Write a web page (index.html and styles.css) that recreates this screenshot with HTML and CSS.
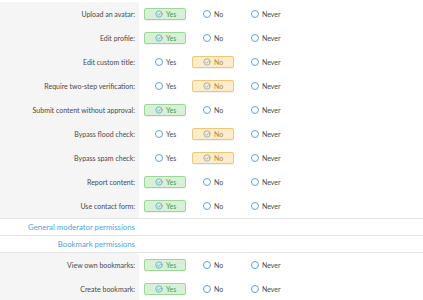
FILE: index.html
```html
<!DOCTYPE html>
<html lang="en">
<head>
  <meta charset="UTF-8" />
  <title>Permissions</title>
  <link rel="stylesheet" href="styles.css">
</head>
<body>
  <div class="perm-list">
    <div class="perm-group">
      <div class="perm-row">
        <div class="perm-label">Upload an avatar:</div>
        <div class="perm-opts">
          <span class="opt yes on"><i class="dot"><svg viewBox="0 0 10 10"><circle cx="5" cy="5" r="4"/><path d="M3 5.2l1.4 1.4 2.6-2.8"/></svg></i>Yes</span>
          <span class="opt"><i class="dot"></i>No</span>
          <span class="opt"><i class="dot"></i>Never</span>
        </div>
      </div>
      <div class="perm-row">
        <div class="perm-label">Edit profile:</div>
        <div class="perm-opts">
          <span class="opt yes on"><i class="dot"><svg viewBox="0 0 10 10"><circle cx="5" cy="5" r="4"/><path d="M3 5.2l1.4 1.4 2.6-2.8"/></svg></i>Yes</span>
          <span class="opt"><i class="dot"></i>No</span>
          <span class="opt"><i class="dot"></i>Never</span>
        </div>
      </div>
      <div class="perm-row">
        <div class="perm-label">Edit custom title:</div>
        <div class="perm-opts">
          <span class="opt"><i class="dot"></i>Yes</span>
          <span class="opt no on"><i class="dot"><svg viewBox="0 0 10 10"><circle cx="5" cy="5" r="4"/><path d="M3 5.2l1.4 1.4 2.6-2.8"/></svg></i>No</span>
          <span class="opt"><i class="dot"></i>Never</span>
        </div>
      </div>
      <div class="perm-row">
        <div class="perm-label">Require two-step verification:</div>
        <div class="perm-opts">
          <span class="opt"><i class="dot"></i>Yes</span>
          <span class="opt no on"><i class="dot"><svg viewBox="0 0 10 10"><circle cx="5" cy="5" r="4"/><path d="M3 5.2l1.4 1.4 2.6-2.8"/></svg></i>No</span>
          <span class="opt"><i class="dot"></i>Never</span>
        </div>
      </div>
      <div class="perm-row">
        <div class="perm-label">Submit content without approval:</div>
        <div class="perm-opts">
          <span class="opt yes on"><i class="dot"><svg viewBox="0 0 10 10"><circle cx="5" cy="5" r="4"/><path d="M3 5.2l1.4 1.4 2.6-2.8"/></svg></i>Yes</span>
          <span class="opt"><i class="dot"></i>No</span>
          <span class="opt"><i class="dot"></i>Never</span>
        </div>
      </div>
      <div class="perm-row">
        <div class="perm-label">Bypass flood check:</div>
        <div class="perm-opts">
          <span class="opt"><i class="dot"></i>Yes</span>
          <span class="opt no on"><i class="dot"><svg viewBox="0 0 10 10"><circle cx="5" cy="5" r="4"/><path d="M3 5.2l1.4 1.4 2.6-2.8"/></svg></i>No</span>
          <span class="opt"><i class="dot"></i>Never</span>
        </div>
      </div>
      <div class="perm-row">
        <div class="perm-label">Bypass spam check:</div>
        <div class="perm-opts">
          <span class="opt"><i class="dot"></i>Yes</span>
          <span class="opt no on"><i class="dot"><svg viewBox="0 0 10 10"><circle cx="5" cy="5" r="4"/><path d="M3 5.2l1.4 1.4 2.6-2.8"/></svg></i>No</span>
          <span class="opt"><i class="dot"></i>Never</span>
        </div>
      </div>
      <div class="perm-row">
        <div class="perm-label">Report content:</div>
        <div class="perm-opts">
          <span class="opt yes on"><i class="dot"><svg viewBox="0 0 10 10"><circle cx="5" cy="5" r="4"/><path d="M3 5.2l1.4 1.4 2.6-2.8"/></svg></i>Yes</span>
          <span class="opt"><i class="dot"></i>No</span>
          <span class="opt"><i class="dot"></i>Never</span>
        </div>
      </div>
      <div class="perm-row">
        <div class="perm-label">Use contact form:</div>
        <div class="perm-opts">
          <span class="opt yes on"><i class="dot"><svg viewBox="0 0 10 10"><circle cx="5" cy="5" r="4"/><path d="M3 5.2l1.4 1.4 2.6-2.8"/></svg></i>Yes</span>
          <span class="opt"><i class="dot"></i>No</span>
          <span class="opt"><i class="dot"></i>Never</span>
        </div>
      </div>
    </div>

    <div class="perm-head"><span>General moderator permissions</span></div>
    <div class="perm-head"><span>Bookmark permissions</span></div>

    <div class="perm-group">
      <div class="perm-row">
        <div class="perm-label">View own bookmarks:</div>
        <div class="perm-opts">
          <span class="opt yes on"><i class="dot"><svg viewBox="0 0 10 10"><circle cx="5" cy="5" r="4"/><path d="M3 5.2l1.4 1.4 2.6-2.8"/></svg></i>Yes</span>
          <span class="opt"><i class="dot"></i>No</span>
          <span class="opt"><i class="dot"></i>Never</span>
        </div>
      </div>
      <div class="perm-row">
        <div class="perm-label">Create bookmark:</div>
        <div class="perm-opts">
          <span class="opt yes on"><i class="dot"><svg viewBox="0 0 10 10"><circle cx="5" cy="5" r="4"/><path d="M3 5.2l1.4 1.4 2.6-2.8"/></svg></i>Yes</span>
          <span class="opt"><i class="dot"></i>No</span>
          <span class="opt"><i class="dot"></i>Never</span>
        </div>
      </div>
    </div>
  </div>
</body>
</html>
```

FILE: styles.css
```css
* {
  margin: 0;
  padding: 0;
  box-sizing: border-box;
}

body {
  background: #fff;
  font-family: Lato, "Noto Sans", sans-serif;
  font-size: 7px;
  color: #4a4a4a;
}

.perm-list {
  padding-top: 2px;
}

.perm-group {
  border-bottom: 1px solid #e3e3e3;
}

.perm-row {
  display: grid;
  grid-template-columns: 139px 1fr;
  height: 24px;
}

.perm-label {
  background: #f5f5f5;
  text-align: right;
  padding-right: 4px;
  line-height: 24px;
  white-space: nowrap;
}

.perm-opts {
  display: flex;
  align-items: center;
  gap: 6px;
  padding-left: 5px;
}

.opt {
  display: flex;
  align-items: center;
  flex: 0 0 42px;
  width: 42px;
  height: 12px;
  padding-left: 10px;
  border: 1px solid transparent;
  border-radius: 2px;
  white-space: nowrap;
  color: #4a4a4a;
}

.dot {
  display: block;
  flex: 0 0 8px;
  width: 8px;
  height: 8px;
  margin-right: 3px;
  border: 1px solid #5ea3d3;
  border-radius: 50%;
  background: #fff;
}

.dot svg {
  display: block;
  width: 8px;
  height: 8px;
  fill: none;
  stroke-width: 1;
  stroke-linecap: round;
  stroke-linejoin: round;
}

.opt.on .dot {
  border: none;
  background: none;
}

.opt.yes.on {
  background: #d8f1d6;
  border-color: #9fd59a;
  color: #4b9a46;
  box-shadow: 0 1px 1px rgba(0, 0, 0, 0.06);
}

.opt.yes.on svg {
  stroke: #5aa9d6;
}

.opt.no.on {
  background: #fcecc9;
  border-color: #ecc878;
  color: #b48a34;
  box-shadow: 0 1px 1px rgba(0, 0, 0, 0.06);
}

.opt.no.on svg {
  stroke: #8aa9c6;
}

.perm-head {
  display: grid;
  grid-template-columns: 139px 1fr;
  height: 17px;
  border-bottom: 1px solid #e3e3e3;
  color: #4fa3db;
  font-size: 7.8px;
  line-height: 16px;
}

.perm-head span {
  text-align: right;
  padding-right: 4px;
  white-space: nowrap;
}
```
